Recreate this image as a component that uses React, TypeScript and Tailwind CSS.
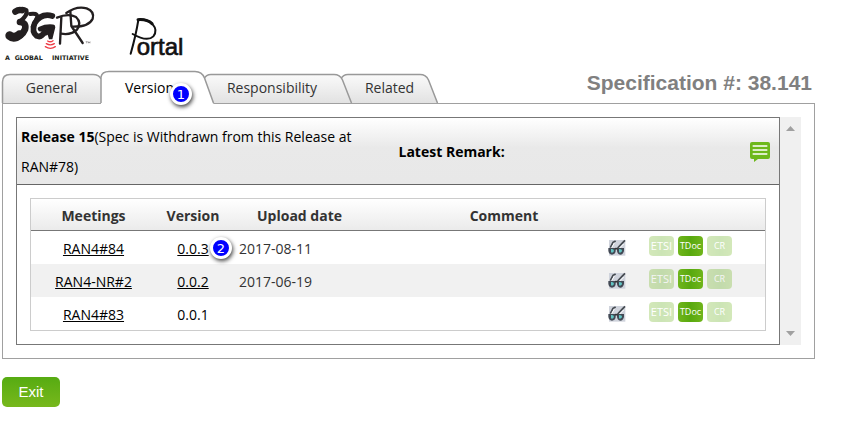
import React from "react";

type TabShape = {
  label: string;
  box: string;
  width: number;
  active?: boolean;
  fill: string;
  line: string;
};

const tabs: TabShape[] = [
  {
    label: "General",
    box: "w-[99px] z-10",
    width: 99,
    fill: "M0.5 32V11Q0.5 3.5 8 3.5H91Q97 3.5 99 8V32Z",
    line: "M0.5 32V11Q0.5 3.5 8 3.5H91Q97 3.5 99 8",
  },
  {
    label: "Version",
    box: "w-[113px] pr-4 z-30",
    width: 113,
    active: true,
    fill: "M0 33V6Q1 0.5 8 0.5H94Q101 0.5 103.500 7L112.500 33Z",
    line: "M0 32V6Q1 0.5 8 0.5H94Q101 0.5 103.500 7L112.500 32",
  },
  {
    label: "Responsibility",
    box: "w-[148px] -ml-[10px] pr-3 z-20",
    width: 148,
    fill: "M0 8Q2 3.5 7 3.5H130Q136 3.5 138.500 9L147.500 32H9Z",
    line: "M0 8Q2 3.5 7 3.5H130Q136 3.5 138.500 9L147.500 32",
  },
  {
    label: "Related",
    box: "w-[97px] -ml-[11px] z-10",
    width: 97,
    fill: "M0 8Q2 3.5 7 3.5H79Q85 3.5 87.500 9L96.500 32H10Z",
    line: "M0 8Q2 3.5 7 3.5H79Q85 3.5 87.500 9L96.500 32",
  },
];

const rows = [
  { meeting: "RAN4#84", version: "0.0.3", linked: true, date: "2017-08-11", step: "2" },
  { meeting: "RAN4-NR#2", version: "0.0.2", linked: true, date: "2017-06-19" },
  { meeting: "RAN4#83", version: "0.0.1", linked: false, date: "" },
];

function Step({ n, place }: { n: string; place: string }) {
  return (
    <span
      className={`absolute flex size-[22px] items-center justify-center rounded-full border-[3px] border-white bg-[#0000ff] font-['DejaVu_Sans',sans-serif] text-[13px] leading-none text-white shadow-[1px_2px_4px_rgba(0,0,0,0.75)] ${place}`}
    >
      {n}
    </span>
  );
}

function InitiativeLogo() {
  return (
    <svg className="h-[66px] w-[110px] shrink-0" viewBox="0 0 330 198" fill="none" role="img" aria-label="3GPP">
      <g stroke="#231f20" strokeLinecap="round" strokeLinejoin="round">
        <path d="M47 34Q66 21 79 31Q84 45 62 63" strokeWidth="13" />
        <path d="M46 35Q56 28 66 31" strokeWidth="19" />
        <path d="M60 66Q80 68 75 88Q66 109 43 113" strokeWidth="20" />
        <path d="M29 107Q42 118 58 104" strokeWidth="26" />
        <path d="M157 48Q124 38 104 70Q94 96 110 108Q124 114 133 96" strokeWidth="17" />
        <path d="M90 42Q111 38 112 50Q106 68 98 80" strokeWidth="12" />
        <path d="M121 87Q138 79 158 81" strokeWidth="15" />
        <path d="M184 52L180 131" strokeWidth="7" />
        <path d="M171 53Q205 39 228 51Q246 68 231 89Q214 106 183 101" strokeWidth="7" />
        <path d="M211 34L214 78L248 129" strokeWidth="7" />
        <path d="M199 39Q229 17 260 25Q284 34 278 56Q267 81 217 80" strokeWidth="7" />
      </g>
      <path d="M136 82H166L157 118H147L143 104L136 108Z" fill="#231f20" />
      <g stroke="#ee3b45" strokeWidth="4" strokeLinecap="round">
        <path d="M143 123Q151 128 159 122" />
        <path d="M139 131Q151 138 163 131" />
        <path d="M136 140Q151 150 166 140" />
      </g>
      <path d="M257 125H263M260 125V130M265 130V125L267 129L270 125V130" stroke="#231f20" />
      <g fontSize="19" fontWeight="700" fill="#231f20" fontFamily="DejaVu Sans, sans-serif">
        <text x="15" y="179">A</text>
        <text x="44" y="179">GLOBAL</text>
        <text x="156" y="179">INITIATIVE</text>
      </g>
    </svg>
  );
}

function PortalLogo() {
  return (
    <svg className="h-[60px] w-[90px] shrink-0" viewBox="0 0 270 180" fill="none" role="img" aria-label="Portal">
      <path d="M85 45Q78 90 62 146" stroke="#111" strokeWidth="6" strokeLinecap="round" />
      <path d="M84 44Q112 42 128 58Q144 76 130 94Q112 112 68 87" stroke="#111" strokeWidth="6" strokeLinecap="round" />
      <path d="M84 44Q112 42 126 56" stroke="#111" strokeWidth="9" strokeLinecap="round" />
      <text x="80" y="151" fontSize="72" fill="#111" stroke="#111" strokeWidth="2" fontFamily="Liberation Sans, sans-serif">
        ortal
      </text>
    </svg>
  );
}

function Glasses() {
  return (
    <svg className="h-[17px] w-[18px]" viewBox="0 0 54 51" fill="none" aria-hidden="true">
      <path d="M3 3H52V50H3Z" fill="#cfd3dc" />
      <path d="M7 26L15 10L23 6M29 27L42 13L51 4" stroke="#454a50" strokeWidth="5" />
      <path d="M11 26L19 12M35 27L47 15" stroke="#fff" strokeWidth="3" />
      <path d="M1 27H23V37Q21 47 12 47Q2 45 1 35ZM27 27H48V36Q45 47 37 47Q28 45 27 36Z" fill="#434a55" />
      <path d="M9 30Q18 29 18 36Q14 44 9 40ZM33 30Q43 30 42 37Q37 44 33 40Z" fill="#62c5c4" />
      <path d="M21 29L29 29" stroke="#333" strokeWidth="5" />
    </svg>
  );
}

const badge =
  "h-5 w-[25px] overflow-hidden rounded-[4px] bg-linear-to-r from-[#70b51b] via-[#58a90e] to-[#70b51b] text-center font-['Open_Sans',sans-serif] leading-5 whitespace-nowrap text-white";

export default function App() {
  return (
    <div className="bg-white pr-[29px] pb-5 pl-0.5 font-['Open_Sans','Noto_Sans',sans-serif] text-sm text-[#333]">
      <header className="-ml-0.5 flex h-[71px] items-start">
        <InitiativeLogo />
        <div className="pt-[5px]">
          <PortalLogo />
        </div>
      </header>

      <div className="flex items-start justify-between">
        <div role="tablist" className="relative z-10 flex">
          {tabs.map((t) => (
            <button
              key={t.label}
              type="button"
              role="tab"
              aria-selected={!!t.active}
              className={`relative h-8 pt-0.5 text-center whitespace-nowrap ${t.box} ${t.active ? "text-black" : ""}`}
            >
              <svg
                className="absolute inset-0 -z-10 h-8 w-full overflow-visible"
                viewBox={`0 0 ${t.width} 32`}
                fill="none"
                aria-hidden="true"
              >
                <defs>
                  <linearGradient id="tabFill" x1="0" y1="0" x2="0" y2="1">
                    <stop stopColor="#fafafa" />
                    <stop offset="1" stopColor="#e2e2e2" />
                  </linearGradient>
                </defs>
                <path d={t.fill} fill={t.active ? "#fff" : "url(#tabFill)"} />
                <path d={t.line} stroke="#999" strokeWidth="1.5" />
              </svg>
              {t.label}
              {t.active && <Step n="1" place="top-3 left-[69px]" />}
            </button>
          ))}
        </div>
        <h1 className="pr-[3px] font-['Liberation_Sans',Arial,sans-serif] text-[21px] leading-6 font-bold text-[#808080]">
          Specification #: 38.141
        </h1>
      </div>

      <main className="flex border border-[#a0a0a0] p-[13px]">
        <section className="min-w-0 flex-1 border border-[#777]">
          <div className="flex items-center border-b border-[#666] bg-linear-to-b from-white via-[#e9e9e9] via-45% to-[#e8e8e8] pt-1 pr-[9px] pb-0.5 pl-1 text-black">
            <p className="w-1/2 pr-8 leading-[30px]">
              <b className="inline-block">Release 15</b>(Spec is Withdrawn from this Release at RAN#78)
            </p>
            <p className="flex-1 pl-[3px] font-bold">Latest Remark:</p>
            <button type="button" aria-label="Remarks">
              <svg className="h-5 w-5" viewBox="0 0 60 60" aria-hidden="true">
                <path d="M6 0H54Q60 0 60 6V45Q60 51 54 51H24L12 60V51H6Q0 51 0 45V6Q0 0 6 0Z" fill="#6db81b" />
                <path d="M8 12H52M8 24H52M8 36H52" stroke="#fff" strokeWidth="5" />
              </svg>
            </button>
          </div>

          <div className="p-[13px]">
            <table className="w-full table-fixed border-separate border-spacing-0 border border-[#ccc]">
              <colgroup>
                <col className="w-[125px]" />
                <col className="w-[74px]" />
                <col className="w-[139px]" />
                <col />
                <col className="w-10" />
                <col className="w-[126px]" />
              </colgroup>
              <thead>
                <tr className="h-8 bg-linear-to-b from-white to-[#eaeaea]">
                  <th className="border-b border-[#777] pt-[3px]">Meetings</th>
                  <th className="border-b border-[#777] pt-[3px]">Version</th>
                  <th className="border-b border-[#777] pt-[3px]">Upload date</th>
                  <th colSpan={2} className="border-b border-[#777] pt-[3px]">Comment</th>
                  <th className="border-b border-[#777]" aria-label="Links" />
                </tr>
              </thead>
              <tbody>
                {rows.map((r) => (
                  <tr key={r.meeting} className="h-[33px] even:bg-[#f1f1f1]">
                    <td className="p-0 pt-0.5 text-center">
                      <a href="#meeting" className="text-black underline">{r.meeting}</a>
                    </td>
                    <td className="relative p-0 pt-0.5 text-center text-black">
                      {r.linked ? <a href="#version" className="underline">{r.version}</a> : r.version}
                      {r.step && <Step n={r.step} place="top-1.5 left-[54px]" />}
                    </td>
                    <td className="p-0 pt-0.5 pl-[9px]">{r.date}</td>
                    <td />
                    <td className="p-0 pl-[9px]">
                      <button type="button" aria-label="View" className="block">
                        <Glasses />
                      </button>
                    </td>
                    <td className="p-0 pb-[3px] pl-2.5">
                      <div className="flex gap-1">
                        <button type="button" disabled className={`${badge} text-[11px] opacity-30`}>ETSI</button>
                        <button type="button" className={`${badge} text-[9px]`}>TDoc</button>
                        <button type="button" disabled className={`${badge} text-[9px] opacity-30`}>CR</button>
                      </div>
                    </td>
                  </tr>
                ))}
              </tbody>
            </table>
          </div>
        </section>

        <div className="flex w-[21px] flex-col items-center justify-between bg-[#f0f0f0] py-[9px]" aria-hidden="true">
          <svg className="h-[5px] w-[9px]" viewBox="0 0 9 5"><path d="M0 5L4.500 0L9 5Z" fill="#a0a0a0" /></svg>
          <svg className="h-[5px] w-[9px]" viewBox="0 0 9 5"><path d="M0 0L4.500 5L9 0Z" fill="#a0a0a0" /></svg>
        </div>
      </main>

      <button
        type="button"
        className="mt-[18px] h-[30px] w-[58px] rounded-[5px] bg-linear-to-b from-[#56ab12] to-[#77b81c] font-['Liberation_Sans',Arial,sans-serif] text-[15px] text-white"
      >
        Exit
      </button>
    </div>
  );
}
